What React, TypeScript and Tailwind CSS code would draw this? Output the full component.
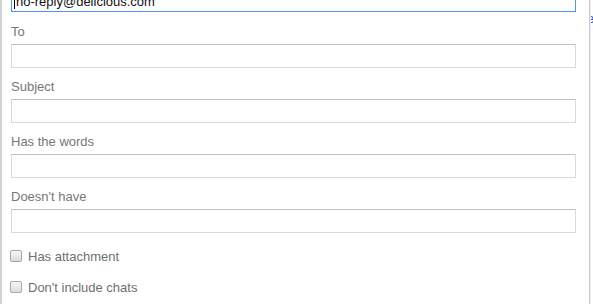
import React from 'react'

const fields = ['To', 'Subject', 'Has the words', "Doesn't have"]
const checks = ['Has attachment', "Don't include chats"]

function Field({ label, first }: { label: string; first?: boolean }) {
  return (
    <div className={first ? 'mt-[12px]' : 'mt-[11px]'}>
      <div className="text-[13px] leading-[16px] text-[#777] mb-[4px]">{label}</div>
      <div className="h-[24px] w-[565px] border border-[#d9d9d9] border-t-[#c0c0c0] bg-white" />
    </div>
  )
}

function Check({ label, first }: { label: string; first?: boolean }) {
  return (
    <div className={`flex items-start ml-[-1px] ${first ? 'mt-[16px]' : 'mt-[15px]'}`}>
      <span className="mt-[1px] h-[12px] w-[12px] shrink-0 rounded-[2px] border border-[#a9a9a9] bg-gradient-to-b from-[#f7f7f7] to-[#dcdcdc]" />
      <span className="ml-[6px] text-[13px] leading-[16px] text-[#6f6f6f]">{label}</span>
    </div>
  )
}

export default function App() {
  return (
    <div className="flex w-[593px] h-[304px] overflow-hidden bg-white font-['Liberation_Sans',Arial,sans-serif]">
      <div className="w-[2px] shrink-0 bg-[#d4d4d4]" />
      <div className="flex w-[587px] shrink-0 flex-col pl-[9px]">
        <div className="mt-[-12px] flex h-[24px] w-[565px] shrink-0 items-start border border-[#4d90fe] pl-[2px] pt-[5px] text-[13px] leading-[15px] text-[#111]">
          <span className="mr-[1px] mt-[1px] h-[14px] w-px bg-black" />
          no-reply@delicious.com
        </div>
        {fields.map((f, i) => (
          <Field key={f} label={f} first={i === 0} />
        ))}
        {checks.map((c, i) => (
          <Check key={c} label={c} first={i === 0} />
        ))}
      </div>
      <div className="w-px shrink-0 bg-[#c9c9c9]" />
      <div className="w-px shrink-0 bg-[#ebebeb]" />
      <div className="flex-1 overflow-hidden pt-[11px] text-[13px] leading-[16px] text-[#15c]">
        <span className="ml-[-4px]">e</span>
      </div>
    </div>
  )
}
